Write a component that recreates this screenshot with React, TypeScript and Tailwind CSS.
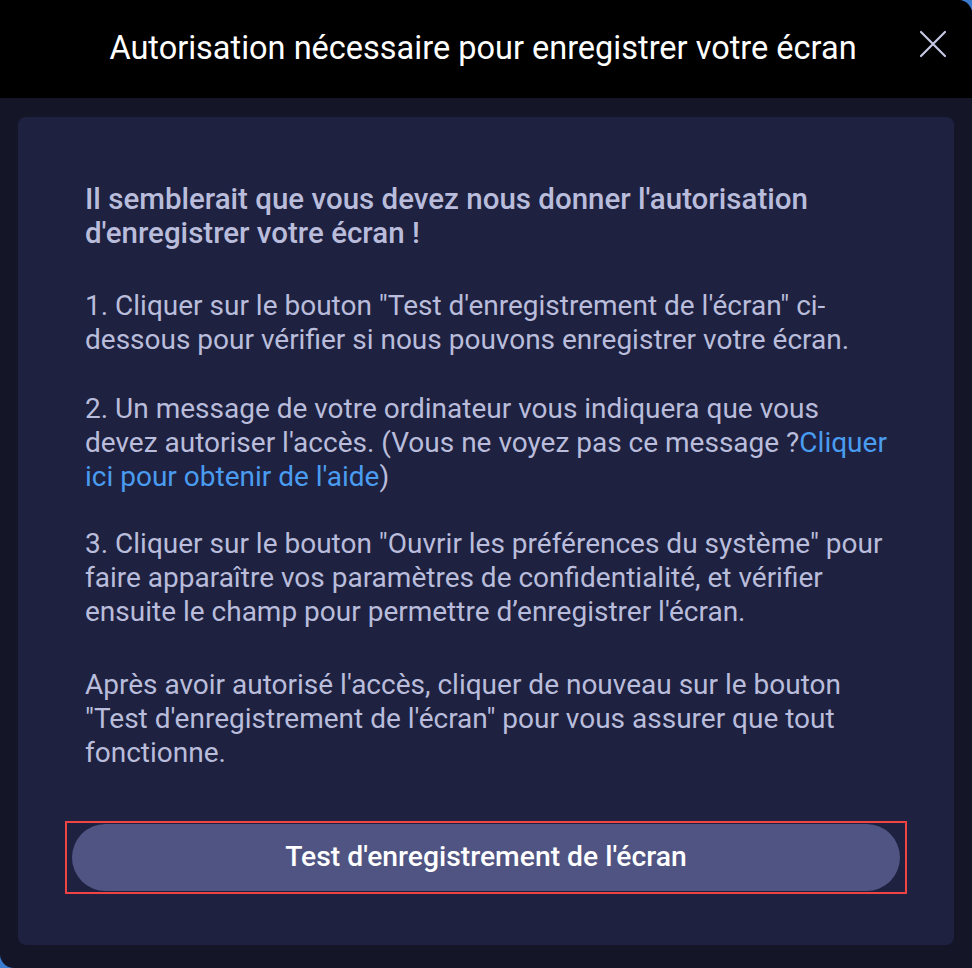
import React from 'react';

const App: React.FC = () => {
  return (
    <div
      className="w-[972px] h-[968px] bg-[#3b7bd0] overflow-hidden"
      style={{ fontFamily: 'Roboto, "Noto Sans", sans-serif' }}
    >
      <div className="w-full h-full flex flex-col bg-[#141628] rounded-tr-[14px] rounded-bl-[14px] overflow-hidden">
        {/* Header */}
        <div className="relative h-[98px] shrink-0 bg-black flex items-center justify-center">
          <h1 className="text-[32.5px] text-white font-normal leading-none -mt-[2px] -ml-[6px]">
            Autorisation nécessaire pour enregistrer votre écran
          </h1>
          <button className="absolute right-[25px] top-[30px] w-[28px] h-[28px] flex items-center justify-center">
            <svg width="28" height="28" viewBox="0 0 28 28" fill="none">
              <path d="M2 2 L26 26 M26 2 L2 26" stroke="#c5c8e4" strokeWidth="2.2" strokeLinecap="round" />
            </svg>
          </button>
        </div>

        {/* Body */}
        <div className="flex-1 px-[18px] pt-[19px] pb-[23px]">
          <div className="h-full bg-[#1e2140] rounded-[8px] flex flex-col px-[47px] pt-[65px]">
            <div className="px-[20px] text-[28px] leading-[34px] text-[#b9bddb]">
              <p className="font-medium text-[29.5px]">
                Il semblerait que vous devez nous donner l'autorisation d'enregistrer votre écran !
              </p>
              <p className="mt-[39px]">
                1. Cliquer sur le bouton "Test d'enregistrement de l'écran" ci-dessous pour vérifier si nous pouvons enregistrer votre écran.
              </p>
              <p className="mt-[35px]">
                2. Un message de votre ordinateur vous indiquera que vous devez autoriser l'accès. (Vous ne voyez pas ce message ?
                <a className="text-[#4a9cf0]">Cliquer ici pour obtenir de l'aide</a>)
              </p>
              <p className="mt-[33px]">
                3. Cliquer sur le bouton "Ouvrir les préférences du système" pour faire apparaître vos paramètres de confidentialité, et vérifier ensuite le champ pour permettre d’enregistrer l'écran.
              </p>
              <p className="mt-[39px]">
                Après avoir autorisé l'accès, cliquer de nouveau sur le bouton "Test d'enregistrement de l'écran" pour vous assurer que tout fonctionne.
              </p>
            </div>

            <div className="mt-[51px] border-2 border-[#f04444] p-[1px] pl-[5px] pr-[5px]">
              <button className="w-full h-[67px] rounded-full bg-[#4f5482] text-white text-[28.3px] font-medium">
                Test d'enregistrement de l'écran
              </button>
            </div>
          </div>
        </div>
      </div>
    </div>
  );
};

export default App;
